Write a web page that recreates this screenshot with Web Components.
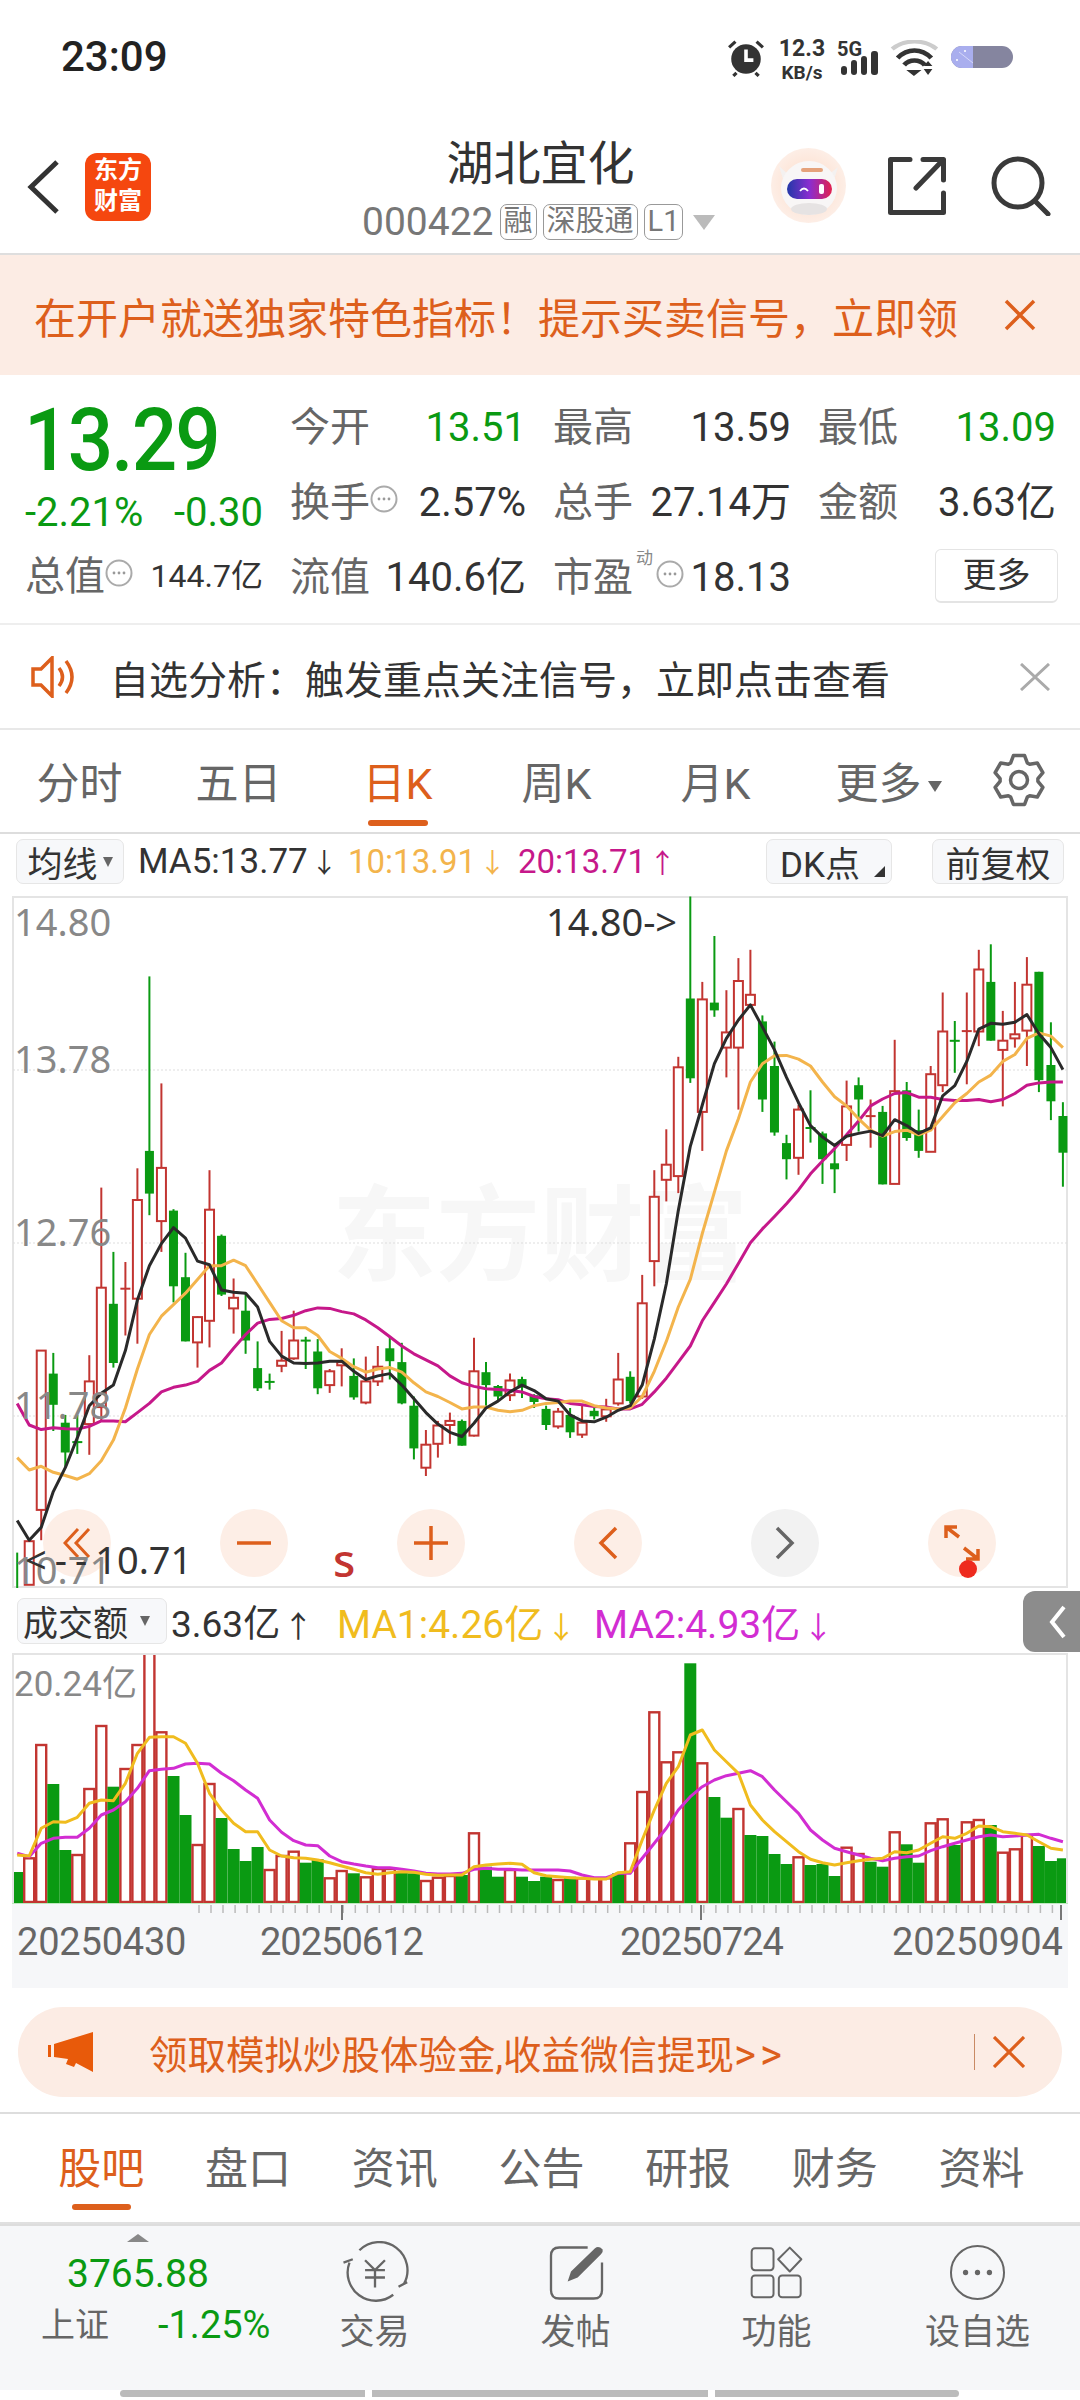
<!DOCTYPE html>
<html lang="zh">
<head>
<meta charset="utf-8">
<title>湖北宜化</title>
<style>
  html, body { margin: 0; background: #fff; }
  body { width: 1080px; height: 2400px; overflow: hidden; font-family: Roboto, "Noto Sans CJK SC", sans-serif; color: #333; }
</style>
</head>
<body>
<status-bar></status-bar>
<nav-bar></nav-bar>
<promo-strip></promo-strip>
<quote-stats></quote-stats>
<notice-row></notice-row>
<period-tabs></period-tabs>
<ma-legend></ma-legend>
<kline-chart></kline-chart>
<vol-legend></vol-legend>
<vol-chart></vol-chart>
<pill-ad></pill-ad>
<sub-tabs></sub-tabs>
<bottom-bar></bottom-bar>
<gesture-bar></gesture-bar>

<script>
const GREEN = '#0a9a12', RED = '#c23531', ORANGE = '#dd5f1c';

function define(name, html) {
  customElements.define(name, class extends HTMLElement {
    constructor() {
      super();
      this.attachShadow({ mode: 'open' }).innerHTML = html;
    }
  });
}

// small circled dots used next to some of the quote labels
customElements.define('info-dot', class extends HTMLElement {
  constructor() {
    super();
    this.attachShadow({ mode: 'open' }).innerHTML = `
      <style>:host { display: inline-flex; width: 28px; height: 30px; flex: none; }</style>
      <svg width="28" height="30" viewBox="0 0 28 30">
        <circle cx="14" cy="15" r="12.5" fill="none" stroke="#aaa" stroke-width="2"/>
        <circle cx="9" cy="15" r="1.4" fill="#999"/><circle cx="14" cy="15" r="1.4" fill="#999"/><circle cx="19" cy="15" r="1.4" fill="#999"/>
      </svg>`;
  }
});

define('status-bar', `
  <style>
    :host { display: flex; height: 115px; box-sizing: border-box; padding: 31px 0 0 61px; }
    .time { font-size: 42px; font-weight: 500; line-height: 52px; color: #222; width: 666px; }
    .icons { display: flex; align-items: flex-start; height: 50px; margin-top: 9px; color: #333; }
    .speed { width: 50px; margin-left: 12px; font-weight: 700; text-align: center; line-height: 20px; }
    .speed div:first-child { font-size: 23px; line-height: 22px; margin-top: -2px; }
    .speed div:last-child { font-size: 19px; line-height: 20px; margin-top: 3px; }
    .net { position: relative; width: 40px; height: 36px; margin-left: 12px; }
    .five { position: absolute; left: -2px; top: -1px; font-size: 20px; font-weight: 700; line-height: 20px; }
  </style>
  <div class="time">23:09</div>
  <div class="icons">
    <svg width="38" height="38" viewBox="0 0 36 36" style="margin-top:-1px">
      <circle cx="18" cy="19" r="14" fill="#333"/>
      <path d="M2 8 8 2.5M34 8 28 2.5M6 35l3-3M30 35l-3-3" stroke="#333" stroke-width="3" fill="none"/>
      <path d="M18 10v10h7" stroke="#fff" stroke-width="3.4" fill="none"/>
    </svg>
    <div class="speed"><div>12.3</div><div>KB/s</div></div>
    <div class="net">
      <span class="five">5G</span>
      <svg width="40" height="36" viewBox="0 0 40 36" style="position:absolute;left:0;top:0">
        <rect x="2" y="26" width="6" height="9" rx="3" fill="#333"/><rect x="12" y="20" width="6" height="15" rx="3" fill="#333"/>
        <rect x="22" y="16" width="6" height="19" rx="3" fill="#333"/><rect x="32" y="11" width="7" height="24" rx="3" fill="#333"/>
      </svg>
    </div>
    <svg width="50" height="36" viewBox="0 0 46 36" preserveAspectRatio="none" style="margin-left:11px">
      <path d="M2 9C13-1 32-1 43 9" stroke="#ccc" stroke-width="4" fill="none"/>
      <path d="M7 18C16 8 29 8 38 18" stroke="#333" stroke-width="4.5" fill="none"/>
      <path d="M13 25C18 19 27 19 32 25" stroke="#333" stroke-width="4.5" fill="none"/>
      <path d="M15 30h14l-7 6zM31 26l4-5 4 5zM31 29h8l-4 6z" fill="#333"/>
    </svg>
    <svg width="62" height="22" viewBox="0 0 62 22" style="margin-left:11px;margin-top:6px">
      <defs><clipPath id="b"><rect width="62" height="22" rx="11"/></clipPath></defs>
      <g clip-path="url(#b)">
        <rect width="62" height="22" fill="#85859f"/>
        <rect width="22" height="22" fill="#a9aeee"/>
        <path d="M8 6 22 17" stroke="#d6d8f8" stroke-width="1"/>
        <circle cx="6" cy="14" r="1" fill="#fff"/><circle cx="14" cy="5" r="1" fill="#fff"/>
      </g>
    </svg>
  </div>`);

define('nav-bar', `
  <style>
    :host { display: block; position: relative; height: 140px; box-sizing: border-box; border-bottom: 2px solid #dedede; }
    .row { display: flex; align-items: center; height: 138px; box-sizing: border-box; padding-top: 5px; }
    .back { margin-left: 25px; flex: none; }
    .logo { flex: none; margin-left: 24px; width: 66px; height: 68px; box-sizing: border-box; padding-top: 2px; border-radius: 12px; background: #f5470f; color: #fff; font-size: 24px; line-height: 31px; font-weight: 700; text-align: center; }
    .mid { flex: none; box-sizing: border-box; width: 621px; padding-left: 160px; text-align: center; }
    .title { font-size: 47px; line-height: 64px; color: #333; margin-left: -2px; }
    .sub { display: flex; align-items: center; height: 38px; margin-top: 7px; margin-left: -160px; padding-left: 211px; color: #777; }
    .code { font-size: 39px; line-height: 38px; margin-right: 6px; }
    .tag { box-sizing: border-box; height: 36px; border: 1px solid #999; border-radius: 7px; font-size: 29px; line-height: 33px; padding: 0 3px; margin-right: 6px; color: #777; }
    .tri { width: 0; height: 0; border: 11px solid transparent; border-top: 15px solid #bbb; border-bottom: 0; margin-left: 4px; }
    .share { flex: none; margin-left: 42px; margin-top: -2px; }
    .search { flex: none; margin-left: 45px; margin-top: -2px; }
  </style>
  <div class="row">
    <svg class="back" width="36" height="56" viewBox="0 0 36 56"><path d="M32 3 6 28l26 25" fill="none" stroke="#333" stroke-width="5"/></svg>
    <div class="logo">东方<br>财富</div>
    <div class="mid">
      <div class="title">湖北宜化</div>
      <div class="sub"><span class="code">000422</span><span class="tag">融</span><span class="tag">深股通</span><span class="tag">L1</span><span class="tri"></span></div>
    </div>
    <svg width="75" height="75" viewBox="0 0 75 75" style="flex:none;margin-left:-1px;margin-top:-2px">
      <defs>
        <linearGradient id="visor" x1="0" x2="1"><stop offset="0" stop-color="#2238a8"/><stop offset=".5" stop-color="#8a2dd0"/><stop offset="1" stop-color="#e2224e"/></linearGradient>
        <radialGradient id="glow"><stop offset=".6" stop-color="#fde6d9"/><stop offset="1" stop-color="#fdeee6"/></radialGradient>
      </defs>
      <circle cx="37.5" cy="37.5" r="37.5" fill="url(#glow)"/>
      <path d="M8 18l11 10-7 3zM67 19l-11 9 7 4z" fill="#f4f1f0"/>
      <ellipse cx="38" cy="40" rx="28" ry="27" fill="#f8f6f6"/>
      <ellipse cx="38" cy="61" rx="18" ry="6" fill="#e6e3e3"/>
      <rect x="30" y="20" width="22" height="4" rx="2" fill="#e5a27b"/>
      <rect x="16" y="31" width="45" height="20" rx="10" fill="url(#visor)"/>
      <path d="M29 43q4-5 8 0" stroke="#fff" stroke-width="1.8" fill="none"/>
      <rect x="48" y="36" width="5" height="10" rx="2" fill="#fff"/>
    </svg>
    <svg class="share" width="58" height="58" viewBox="0 0 58 58"><path d="M22 2.5H2.500V55.500H55.500V36M28 31 55 3M35 2.500H55.500V23" fill="none" stroke="#3a3a3a" stroke-width="5" stroke-linecap="round" stroke-linejoin="round"/></svg>
    <svg class="search" width="60" height="60" viewBox="0 0 60 60"><circle cx="27" cy="27" r="24" fill="none" stroke="#3a3a3a" stroke-width="5"/><path d="M44 45 57 58" stroke="#3a3a3a" stroke-width="5" stroke-linecap="round"/></svg>
  </div>`);

define('promo-strip', `
  <style>
    :host { display: flex; align-items: center; height: 120px; padding-left: 34px; background: #fcece4; color: ${ORANGE}; font-size: 42px; white-space: nowrap; }
    svg { margin-left: 47px; flex: none; }
    .t { width: 923px; overflow: hidden; }
  </style>
  <div class="t">在开户就送独家特色指标！提示买卖信号，立即领</div>
  <svg width="32" height="32" viewBox="0 0 32 32"><path d="M2 2 30 30M30 2 2 30" stroke="${ORANGE}" stroke-width="3.500"/></svg>`);

define('quote-stats', `
  <style>
    :host { display: grid; grid-template-columns: 238px 767px; column-gap: 27px; height: 250px; box-sizing: border-box; padding: 15px 0 0 25px; border-bottom: 2px solid #eee; font-size: 40px; color: #333; white-space: nowrap; }
    .left { display: flex; flex-direction: column; }
    .price { height: 100px; font-size: 87px; line-height: 100px; font-weight: 500; color: ${GREEN}; letter-spacing: -2px; transform: scaleX(.92); transform-origin: left center; margin-left: -1px; }
    .pct { display: flex; justify-content: space-between; height: 46px; margin-bottom: 3px; font-size: 40px; line-height: 46px; color: ${GREEN}; }
    .grid { display: grid; grid-template-columns: 236px 238px 238px; column-gap: 27px; grid-auto-rows: 75px; }
    .cell { display: flex; align-items: center; line-height: 75px; }
    .lb { color: #666; font-size: 40px; }
    .v { margin-left: auto; }
    .g { color: ${GREEN}; }
    .small { font-size: 32px; }
    .up { margin-top: -8px; }
    sup { font-size: 17px; color: #888; line-height: 17px; margin: -38px 3px 0 3px; }
    .more { box-sizing: border-box; width: 123px; height: 54px; margin: -4px -2px 0 auto; border: 1px solid #e4e4e4; border-bottom-width: 2px; border-radius: 6px; text-align: center; font-size: 34px; line-height: 50px; color: #333; }
  </style>
  <div class="left">
    <div class="price">13.29</div>
    <div class="pct"><span>-2.21%</span><span>-0.30</span></div>
    <div class="cell"><span class="lb">总值</span><info-dot class="up"></info-dot><span class="v small">144.7亿</span></div>
  </div>
  <div class="grid">
    <div class="cell"><span class="lb">今开</span><span class="v g">13.51</span></div>
    <div class="cell"><span class="lb">最高</span><span class="v">13.59</span></div>
    <div class="cell"><span class="lb">最低</span><span class="v g">13.09</span></div>
    <div class="cell"><span class="lb">换手</span><info-dot class="up"></info-dot><span class="v">2.57%</span></div>
    <div class="cell"><span class="lb">总手</span><span class="v">27.14万</span></div>
    <div class="cell"><span class="lb">金额</span><span class="v">3.63亿</span></div>
    <div class="cell"><span class="lb">流值</span><span class="v">140.6亿</span></div>
    <div class="cell"><span class="lb">市盈</span><sup>动</sup><info-dot class="up"></info-dot><span class="v">18.13</span></div>
    <div class="cell"><span class="more">更多</span></div>
  </div>`);

define('notice-row', `
  <style>
    :host { display: flex; align-items: center; height: 105px; box-sizing: border-box; padding-left: 31px; border-bottom: 2px solid #e8e8e8; font-size: 39px; color: #333; white-space: nowrap; }
    .t { width: 910px; margin-left: 31px; }
  </style>
  <svg width="48" height="42" viewBox="0 0 48 42" style="flex:none"><path d="M2 13H10L21 2V40L10 29H2ZM28 12Q35 21 28 30M35 5Q47 21 35 37" fill="none" stroke="${ORANGE}" stroke-width="3.500"/></svg>
  <div class="t">自选分析：触发重点关注信号，立即点击查看</div>
  <svg width="30" height="28" viewBox="0 0 30 28"><path d="M1 1 29 27M29 1 1 27" stroke="#aaa" stroke-width="3"/></svg>`);

function gearPath(cx, cy, ro, ri) {
  let d = '';
  for (let i = 0; i < 6; i++) {
    const a = -Math.PI / 2 + i * Math.PI / 3, s = 0.3;
    const pts = [[ro, a - s * .75], [ro, a + s * .75], [ri, a + s * 1.5], [ri, a + Math.PI / 3 - s * 1.5]];
    pts.forEach(([r, t], j) => { d += (i + j ? 'L' : 'M') + (cx + r * Math.cos(t)).toFixed(1) + ' ' + (cy + r * Math.sin(t)).toFixed(1); });
  }
  return d + 'Z';
}

define('period-tabs', `
  <style>
    :host { display: grid; position: relative; grid-template-columns: repeat(6, 159px) 126px; height: 104px; box-sizing: border-box; border-bottom: 2px solid #ddd; font-size: 43px; color: #666; align-items: center; text-align: center; padding-bottom: 2px; }
    .on { color: ${ORANGE}; }
    .on::after { content: ""; position: absolute; left: 368px; top: 90px; width: 60px; height: 6px; border-radius: 3px; background: ${ORANGE}; }
    .arr { display: inline-block; width: 0; height: 0; border: 7px solid transparent; border-top: 11px solid #666; border-bottom: 0; margin-left: 6px; vertical-align: 7px; }
    span:nth-of-type(6) { padding-left: 28px; }
  </style>
  <span>分时</span><span>五日</span><span class="on">日K</span><span>周K</span><span>月K</span><span>更多<i class="arr"></i></span>
  <svg width="52" height="54" viewBox="0 0 52 54" style="margin-left:39px"><path d="${gearPath(26, 27, 25, 19)}" fill="none" stroke="#666" stroke-width="3.500" stroke-linejoin="round"/><circle cx="26" cy="27" r="8.500" fill="none" stroke="#666" stroke-width="3.500"/></svg>`);

const legendCss = `
  :host { display: flex; align-items: center; box-sizing: border-box; font-size: 33px; white-space: nowrap; color: #333; }
  .box { box-sizing: border-box; flex: none; display: flex; align-items: center; justify-content: center; background: #f7f8fa; border: 1px solid #e6e6e6; border-radius: 7px; height: 45px; color: #333; font-size: 35px; }
  .tri { width: 0; height: 0; border: 5px solid transparent; border-top: 10px solid #666; border-bottom: 0; margin-left: 5px; }
  .ar { display: inline-block; width: 16px; margin-left: 3px; overflow: visible; text-align: center; font-size: 27px; }
`;

define('ma-legend', `
  <style>
    ${legendCss}
    :host { height: 62px; padding: 0 0 7px 16px; }
    .wid { width: 108px; }
    .item { flex: none; }
    .a { margin-left: 14px; width: 210px; font-size: 35px; }
    .y { color: #f3b44c; width: 170px; }
    .m { color: #c6188a; width: 248px; }
    .dk { position: relative; width: 126px; justify-content: flex-start; padding-left: 13px; }
    .dk::after { content: ""; position: absolute; right: 6px; bottom: 6px; width: 0; height: 0; border-left: 11px solid transparent; border-bottom: 11px solid #333; }
    .fq { width: 132px; margin-left: 40px; }
  </style>
  <div class="box wid">均线<i class="tri"></i></div>
  <span class="item a">MA5:13.77<span class="ar">↓</span></span><span class="item y">10:13.91<span class="ar">↓</span></span><span class="item m">20:13.71<span class="ar">↑</span></span>
  <div class="box dk">DK点</div>
  <div class="box fq">前复权</div>`);

// candle data read off the reference: type, high, body top, body bottom, low (crop coords)
const CANDLES = 'g1465 1530 1543 1543,r1440 1440 1535 1535,r1025 1025 1372 1438,g1030 1075 1143 1200,g1165 1182 1247 1280,g1165 1222 1226 1250,r1035 1092 1185 1252,r670 888 1148 1180,g810 923 1052 1062,r832 888 892 992,r628 697 912 1010,g210 590 683 730,r443 627 743 810,g717 720 885 920,g812 865 1005 1005,r950 952 1007 1062,r632 718 960 1018,g772 775 903 906,r868 910 933 988,g900 938 1003 1032,g1005 1063 1107 1113,g1075 1091 1095 1110,r982 1047 1058 1072,r938 1003 1042 1045,g995 1001 1007 1065,g1000 1027 1107 1120,r1065 1070 1100 1117,r1020 1050 1057 1103,g1042 1080 1127 1132,r1038 1092 1138 1142,r1015 1060 1092 1102,g995 1020 1048 1088,g1008 1050 1140 1142,g1125 1145 1238 1262,r1198 1230 1280 1298,r1178 1188 1228 1258,r1160 1178 1187 1228,g1175 1178 1232 1232,r997 1070 1210 1212,g1050 1072 1100 1145,g1100 1102 1125 1135,r1075 1090 1122 1135,g1082 1087 1105 1128,g1120 1122 1137 1150,g1145 1152 1187 1198,r1150 1158 1190 1195,g1150 1165 1203 1215,r1145 1182 1208 1215,g1150 1156 1168 1175,r1130 1153 1168 1180,r1030 1088 1140 1145,g1070 1082 1135 1140,r860 922 1125 1130,r632 690 830 885,r543 620 653 700,r385 408 645 682,g36 258 432 442,r222 260 505 590,g122 267 284 298,r240 332 365 430,r170 220 365 500,r152 250 272 275,g295 308 478 505,g352 405 550 557,g555 573 608 652,r490 500 605 642,g458 538 542 572,g548 552 608 662,g575 617 630 682,r437 493 577 612,g430 447 478 548,r478 512 517 583,g492 505 663 663,r348 460 662 662,g440 458 562 568,g500 545 590 605,r405 423 592 592,r245 330 447 462,g307 348 352 420,r245 327 331 445,r152 195 330 362,g140 222 350 350,r285 350 370 493,r222 336 345 365,r168 228 328 405,g200 200 436 462,g310 403 482 523,g484 514 594 668';
const MA5 = [1395,1438,1410,1332,1280,1215,1145,1118,1100,1025,915,840,792,757,780,830,838,893,898,900,930,1005,1037,1052,1053,1052,1048,1048,1070,1088,1080,1075,1100,1130,1160,1185,1203,1212,1183,1150,1135,1115,1100,1112,1130,1135,1165,1178,1180,1170,1155,1145,1100,1000,880,720,580,490,400,345,305,272,320,370,430,485,535,560,578,558,552,547,557,522,535,552,540,470,448,395,325,312,314,310,293,335,365,413];
const MA10 = [1258,1285,1277,1290,1297,1305,1293,1265,1220,1150,1065,990,950,925,900,870,840,840,828,840,880,920,960,975,975,992,1027,1042,1060,1072,1065,1062,1072,1095,1115,1125,1138,1152,1148,1148,1155,1158,1155,1145,1140,1138,1135,1135,1145,1150,1152,1150,1125,1070,1005,930,870,770,680,590,520,440,400,383,382,390,405,440,472,492,520,545,558,548,545,555,545,515,485,465,440,425,395,380,345,333,340,365];
const MA20 = [1140,1187,1197,1193,1195,1196,1190,1178,1178,1180,1160,1140,1115,1105,1100,1092,1068,1052,1020,990,965,957,955,948,938,932,933,940,945,958,975,995,1015,1032,1045,1058,1080,1095,1103,1108,1110,1112,1115,1125,1130,1132,1140,1143,1147,1148,1152,1152,1142,1115,1085,1050,1015,960,920,880,835,790,760,733,705,675,640,612,585,555,525,492,477,465,463,473,473,478,480,480,478,483,478,465,447,442,440,440];
const VOLS = 'g876,r835,r495,g612,g810,r825,r627,r438,g620,r567,r495,r218,r457,g588,g705,r795,r612,g714,g807,g843,g801,r870,r828,r815,g848,g838,r895,r873,g880,r892,r867,r867,g878,g880,r903,r893,r888,g885,r760,g860,g890,r870,g890,g903,g890,r900,g890,r895,r895,r895,g880,r790,r636,r397,r547,r517,g250,r550,g651,g713,r687,g765,g768,g822,g852,r832,g855,g852,g888,r803,r822,g845,g860,r757,g793,g848,r730,r718,g795,r727,r720,g735,r818,r808,r765,g798,g843,g835';
const VMA1 = [825,828,745,725,727,712,670,660,662,610,520,472,470,470,490,550,640,690,730,755,755,810,828,833,835,840,848,858,868,878,883,878,875,877,883,886,885,885,860,855,852,850,853,878,887,890,893,895,897,897,878,875,780,690,610,560,465,450,510,545,580,675,720,755,785,815,838,848,855,848,842,838,835,815,818,810,790,770,775,760,738,740,755,760,765,785,805,810];
const VMA2 = [820,830,790,775,772,772,745,705,690,665,625,572,568,565,552,550,552,580,602,630,655,720,757,782,795,797,828,845,852,858,863,863,868,873,880,882,882,880,868,865,868,868,870,870,870,870,873,885,893,893,880,880,835,790,745,690,650,620,600,587,580,572,590,630,665,700,750,780,805,815,825,835,842,835,830,828,812,800,790,780,770,765,770,768,765,763,775,785];
const cx = i => 17.2 + 12.02 * i;
const ky = y => +(880 + y / 2.178).toFixed(1);
const vy = y => 1580 + y / 3;
const line = (arr, fy, color, w) => `<polyline fill="none" stroke="${color}" stroke-width="${w}" stroke-linejoin="round" points="${arr.map((y, i) => cx(i).toFixed(1) + ',' + fy(y).toFixed(1)).join(' ')}"/>`;

class KlineChart extends HTMLElement {
  constructor() {
    super();
    this.attachShadow({ mode: 'open' });
  }

  connectedCallback() {
    const bars = CANDLES.split(',').map((s, i) => {
      const [hi, top, bot, lo] = s.slice(1).split(' ').map(n => ky(+n));
      const x = cx(i).toFixed(1), red = s[0] === 'r', c = red ? RED : GREEN;
      let out = `<path d="M${x} ${hi}V${lo}" stroke="${c}" stroke-width="2"/>`;
      if (i === 0) return out;
      if (bot - top < 3) return out + `<path d="M${cx(i) - 5} ${top + 1}h10" stroke="${c}" stroke-width="2"/>`;
      out += red
        ? `<rect x="${cx(i) - 4.5}" y="${top}" width="9" height="${(bot - top).toFixed(1)}" fill="#fff" stroke="${c}" stroke-width="2"/>`
        : `<rect x="${cx(i) - 4.5}" y="${top}" width="9" height="${(bot - top).toFixed(1)}" fill="${c}"/>`;
      return out;
    }).join('');
    const grid = [1070, 1243, 1416].map(y => `<path d="M13 ${y}H1067" stroke="#ddd" stroke-width="1" stroke-dasharray="2 2"/>`).join('');
    this.shadowRoot.innerHTML = `
      <style>
        :host { display: block; position: relative; width: 1056px; height: 692px; margin-left: 12px; box-sizing: border-box; border: 2px solid #e4e4e4; }
        .plot { position: absolute; left: -2px; top: -2px; }
        .mark { position: absolute; left: 318px; top: 280px; font-size: 104px; line-height: 120px; font-weight: 700; color: #f7f7f7; white-space: nowrap; }
        .px { position: absolute; font-family: "Noto Sans", sans-serif; font-size: 38px; line-height: 34px; color: #888; white-space: nowrap; }
        .k { color: #333; }
        .k span { letter-spacing: 8px; }
        .s { position: absolute; left: 319px; top: 642px; font-family: "Noto Sans", sans-serif; font-size: 46px; line-height: 38px; font-weight: 500; color: ${RED}; }
        .tools { position: absolute; left: 29px; top: 611px; display: flex; gap: 109px; }
        .tools div { width: 68px; height: 68px; border-radius: 50%; background: #fdeee6; display: flex; align-items: center; justify-content: center; }
        .tools div.off { background: #f2f2f2; }
        .dot { position: absolute; left: 945px; top: 662px; width: 18px; height: 18px; border-radius: 50%; background: #ee2a1e; }
      </style>
      <div class="mark">东方财富</div>
      <svg class="plot" width="1056" height="692" viewBox="12 896 1056 692">${grid}${bars}
        ${line(MA20, ky, '#c6188a', 3)}${line(MA10, ky, '#f3b44c', 3)}${line(MA5, ky, '#2a2a2a', 3)}
      </svg>
      <div class="px" style="left:0;top:6px">14.80</div>
      <div class="px" style="left:0;top:143px">13.78</div>
      <div class="px" style="left:0;top:316px">12.76</div>
      <div class="px" style="left:0;top:489px">11.78</div>
      <div class="tools">
        <div><svg width="28" height="32" viewBox="0 0 28 32"><path d="M15 2 2 16l13 14M26 2 13 16l13 14" fill="none" stroke="${ORANGE}" stroke-width="3"/></svg></div>
        <div><svg width="34" height="4" viewBox="0 0 34 4"><path d="M0 2H34" stroke="${ORANGE}" stroke-width="3.500"/></svg></div>
        <div><svg width="34" height="34" viewBox="0 0 34 34"><path d="M0 17H34M17 0V34" stroke="${ORANGE}" stroke-width="3.500"/></svg></div>
        <div><svg width="20" height="34" viewBox="0 0 20 34"><path d="M18 2 3 17l15 15" fill="none" stroke="${ORANGE}" stroke-width="3.500"/></svg></div>
        <div class="off"><svg width="20" height="34" viewBox="0 0 20 34"><path d="M2 2l15 15L2 32" fill="none" stroke="#666" stroke-width="3.500"/></svg></div>
        <div><svg width="36" height="36" viewBox="0 0 36 36"><path d="M2 13V2H13M2 2 15 12M34 24V34H22M34 34 20 23" fill="none" stroke="${ORANGE}" stroke-width="3.500"/></svg></div>
      </div>
      <div class="px" style="left:0;top:654px">10.71</div>
      <div class="px k" style="left:532px;top:6px">14.80-&gt;</div>
      <div class="px k" style="left:11px;top:644px"><span>&lt;--</span>10.71</div>
      <div class="s">s</div>
      <div class="dot"></div>`;
  }
}
customElements.define('kline-chart', KlineChart);

define('vol-legend', `
  <style>
    ${legendCss}
    :host { position: relative; height: 65px; padding: 0 0 0 17px; font-size: 39px; }
    .wid { width: 150px; height: 46px; margin-right: 4px; font-size: 35px; justify-content: flex-start; padding-left: 5px; }
    .wid .tri { margin-left: 12px; }
    .a { width: 166px; font-size: 37px; }
    .y { color: #f0bc1e; width: 257px; }
    .m { color: #d22dd2; }
    .ar { font-size: 30px; }
    .tab { position: absolute; right: 0; top: 3px; width: 45px; height: 61px; padding-left: 12px; background: #8c8c8c; border-radius: 12px 0 0 12px; display: flex; align-items: center; justify-content: center; }
  </style>
  <div class="box wid">成交额<i class="tri"></i></div>
  <span class="a">3.63亿<span class="ar">↑</span></span><span class="y">MA1:4.26亿<span class="ar">↓</span></span><span class="m">MA2:4.93亿<span class="ar">↓</span></span>
  <div class="tab"><svg width="18" height="34" viewBox="0 0 18 34"><path d="M15 2 3 17l12 15" fill="none" stroke="#fff" stroke-width="4"/></svg></div>`);

class VolChart extends HTMLElement {
  constructor() {
    super();
    this.attachShadow({ mode: 'open' });
  }

  connectedCallback() {
    const bars = VOLS.split(',').map((s, i) => {
      const y = vy(+s.slice(1)).toFixed(1);
      return s[0] === 'g'
        ? `<rect x="${(cx(i) - 6).toFixed(1)}" y="${y}" width="12" height="${(1903 - y).toFixed(1)}" fill="${GREEN}"/>`
        : `<rect x="${(cx(i) - 5).toFixed(1)}" y="${y}" width="10" height="${(1902 - y).toFixed(1)}" fill="#fff" stroke="${RED}" stroke-width="2.400"/>`;
    }).join('');
    let ticks = '';
    for (let x = 199; x < 1062; x += 12.02) ticks += `<path d="M${x.toFixed(1)} 1905V1913" stroke="#bbb" stroke-width="1.500"/>`;
    [342, 701, 1061].forEach(x => { ticks += `<path d="M${x} 1905V1920" stroke="#777" stroke-width="2"/>`; });
    this.shadowRoot.innerHTML = `
      <style>
        :host { display: block; position: relative; width: 1056px; height: 335px; margin-left: 12px; box-sizing: border-box; background: #f6f7f9; }
        svg { position: absolute; left: 0; top: 0; }
        .box { position: absolute; left: 0; top: 0; width: 1056px; height: 250px; box-sizing: border-box; border: 2px solid #e4e4e4; border-bottom: 0; pointer-events: none; }
        .max { position: absolute; left: 2px; top: 9px; font-size: 35px; line-height: 46px; color: #888; }
        .d { position: absolute; top: 267px; font-size: 38px; line-height: 44px; color: #666; white-space: nowrap; }
      </style>
      <svg width="1056" height="270" viewBox="12 1653 1056 270"><rect x="12" y="1653" width="1056" height="250" fill="#fff"/>${bars}
        ${line(VMA2, vy, '#d22dd2', 3)}${line(VMA1, vy, '#f0bc1e', 3)}
        <path d="M12 1903.500H1068" stroke="#bfe8bf" stroke-width="1"/>${ticks}
      </svg>
      <div class="box"></div>
      <div class="max">20.24亿</div>
      <div class="d" style="left:5px;letter-spacing:-.2px">20250430</div>
      <div class="d" style="left:248px;letter-spacing:-1px">20250612</div>
      <div class="d" style="left:608px;letter-spacing:-1px">20250724</div>
      <div class="d" style="left:880px">20250904</div>`;
  }
}
customElements.define('vol-chart', VolChart);

define('pill-ad', `
  <style>
    :host { display: block; height: 126px; box-sizing: border-box; padding: 19px 18px 0; border-bottom: 2px solid #ddd; }
    .pill { display: flex; align-items: center; height: 90px; padding-left: 30px; border-radius: 45px; background: #fcece4; color: ${ORANGE}; font-size: 38.500px; white-space: nowrap; }
    .t { width: 825px; margin-left: 56px; }
    .t span { font-size: 42px; letter-spacing: 4px; }
    .sep { width: 1px; height: 36px; background: #c98a64; margin-right: 18px; }
  </style>
  <div class="pill">
    <svg width="45" height="40" viewBox="0 0 45 40" style="flex:none"><path d="M0 13h3v12H0zM6 12 45 0V40L28 31 26 35 18 32 20 27 6 25Z" fill="#e85a0a"/></svg>
    <div class="t">领取模拟炒股体验金,收益微信提现<span>&gt;&gt;</span></div>
    <div class="sep"></div>
    <svg width="32" height="32" viewBox="0 0 32 32"><path d="M1 1 31 31M31 1 1 31" stroke="${ORANGE}" stroke-width="3.200"/></svg>
  </div>`);

define('sub-tabs', `
  <style>
    :host { display: grid; position: relative; grid-template-columns: repeat(7, 146.700px); height: 110px; box-sizing: border-box; padding: 0 0 6px 28px; border-bottom: 2px solid #e0e0e0; align-items: center; text-align: center; font-size: 43px; color: #666; }
    .on { color: ${ORANGE}; }
    .on::after { content: ""; position: absolute; left: 72px; top: 90px; width: 59px; height: 6px; border-radius: 3px; background: ${ORANGE}; }
  </style>
  <span class="on">股吧</span><span>盘口</span><span>资讯</span><span>公告</span><span>研报</span><span>财务</span><span>资料</span>`);

define('bottom-bar', `
  <style>
    :host { display: grid; grid-template-columns: 274px repeat(4, 201px); height: 166px; box-sizing: border-box; background: #f6f7f9; border-top: 2px solid #ddd; }
    .idx { position: relative; padding-top: 8px; }
    .up { width: 0; height: 0; margin-left: 127px; border: 11px solid transparent; border-bottom: 8px solid #888; border-top: 0; }
    .num { margin-left: 67px; font-size: 39px; line-height: 46px; margin-top: 9px; color: ${GREEN}; }
    .line { display: flex; align-items: center; padding-left: 41px; margin-top: 4px; line-height: 48px; }
    .line span:first-child { font-size: 34px; color: #666; width: 117px; }
    .line span:last-child { font-size: 38px; color: ${GREEN}; }
    .it { display: flex; flex-direction: column; align-items: center; font-size: 35px; color: #666; }
    .ic { height: 72px; margin-top: 10px; display: flex; align-items: center; }
    .it span { line-height: 40px; margin-top: 5px; }
  </style>
  <div class="idx">
    <div class="up"></div>
    <div class="num">3765.88</div>
    <div class="line"><span>上证</span><span>-1.25%</span></div>
  </div>
  <div class="it">
    <div class="ic"><svg width="70" height="63" viewBox="30 20 210 190" fill="none" stroke="#666" stroke-width="7"><path d="M88 48A85 85 0 0 1 222 150M206 158 232 144M190 182A85 85 0 0 1 58 85M40 85 68 75"/><path d="M105 78 135 108 165 78M105 108H165M105 130H165M135 108V160"/></svg></div>
    <span>交易</span>
  </div>
  <div class="it">
    <div class="ic"><svg width="60" height="57" viewBox="650 30 180 170" fill="none" stroke="#666" stroke-width="7"><path d="M775 40H690Q665 40 665 65V168Q665 193 690 193H793Q818 193 818 168V85"/><path d="M715 142 725 112 797 42Q808 34 820 46 822 54 815 60L745 130Z" fill="#666" stroke="none"/></svg></div>
    <span>发帖</span>
  </div>
  <div class="it">
    <div class="ic"><svg width="53" height="53" viewBox="35 35 160 160" fill="none" stroke="#666" stroke-width="6"><rect x="40" y="42" width="66" height="66" rx="10"/><rect x="40" y="124" width="66" height="66" rx="10"/><rect x="122" y="124" width="66" height="66" rx="10"/><path d="M155 40 190 75 155 112 120 75Z" stroke-linejoin="round"/></svg></div>
    <span>功能</span>
  </div>
  <div class="it">
    <div class="ic"><svg width="57" height="57" viewBox="630 30 172 172" fill="none" stroke="#666" stroke-width="6"><circle cx="716" cy="116" r="80"/><circle cx="680" cy="116" r="8" fill="#666" stroke="none"/><circle cx="716" cy="116" r="8" fill="#666" stroke="none"/><circle cx="752" cy="116" r="8" fill="#666" stroke="none"/></svg></div>
    <span>设自选</span>
  </div>`);

define('gesture-bar', `
  <style>
    :host { position: absolute; left: 120px; top: 2390px; display: flex; gap: 7px; }
    div { height: 7px; background: #bbb; }
    .a { width: 245px; border-radius: 4px 0 0 4px; }
    .b { width: 336px; }
    .c { width: 244px; border-radius: 0 4px 4px 0; }
  </style>
  <div class="a"></div><div class="b"></div><div class="c"></div>`);
</script>
</body>
</html>
